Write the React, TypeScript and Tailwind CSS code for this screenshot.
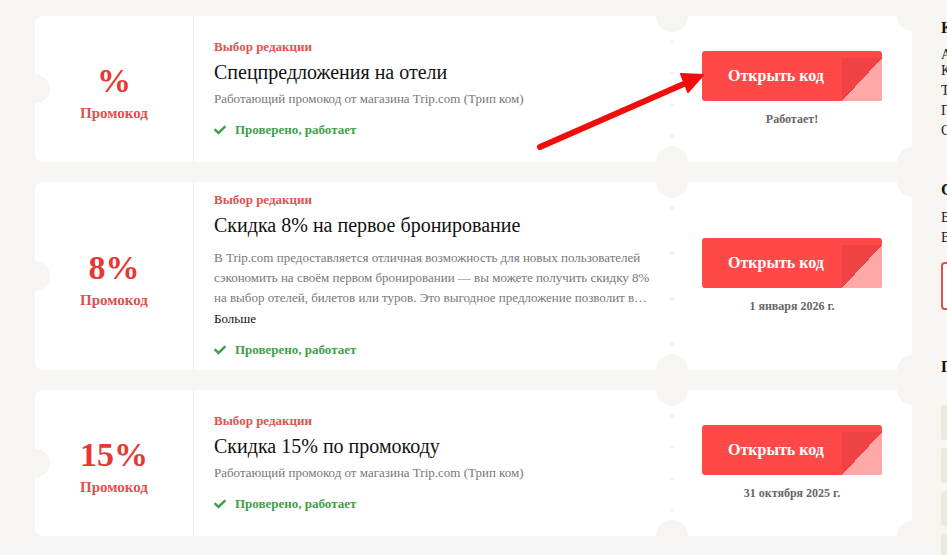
import React from "react";
import { FaCheck } from "react-icons/fa";

type Coupon = {
  big: string;
  title: string;
  desc?: string;
  long?: string;
  caption: string;
};

const coupons: Coupon[] = [
  {
    big: "%",
    title: "Спецпредложения на отели",
    desc: "Работающий промокод от магазина Trip.com (Трип ком)",
    caption: "Работает!",
  },
  {
    big: "8%",
    title: "Скидка 8% на первое бронирование",
    long:
      "В Trip.com предоставляется отличная возможность для новых пользователей сэкономить на своём первом бронировании — вы можете получить скидку 8% на выбор отелей, билетов или туров. Это выгодное предложение позволит вам сэкономить на поездке. Воспользуйтесь промокодом при оформлении заказа.",
    caption: "1 января 2026 г.",
  },
  {
    big: "15%",
    title: "Скидка 15% по промокоду",
    desc: "Работающий промокод от магазина Trip.com (Трип ком)",
    caption: "31 октября 2025 г.",
  },
];

function Card({ c }: { c: Coupon }) {
  return (
    <div className="relative flex bg-white rounded-[8px] min-h-[146px]">
      {/* left column */}
      <div className="w-[159px] shrink-0 border-r border-[#efefef] flex flex-col items-center justify-center pt-[6px]">
        <div className="text-[34px] leading-[36px] font-bold text-[#e53935]">{c.big}</div>
        <div className="mt-[5px] text-[15px] leading-[18px] font-bold text-[#e05050]">Промокод</div>
      </div>

      {/* content */}
      <div className="flex-1 min-w-0 flex flex-col justify-center py-[10px] pl-[20px] pr-[20px]">
        <div className="text-[13px] leading-[16px] font-bold text-[#e05252]">Выбор редакции</div>
        <div className="mt-[5px] text-[20px] leading-[24px] text-[#111111]">{c.title}</div>
        {c.desc && (
          <div className="mt-[5px] text-[13px] leading-[20px] text-[#777777]">{c.desc}</div>
        )}
        {c.long && (
          <>
            <div className="mt-[11px] text-[13px] leading-[20px] text-[#777777] line-clamp-3">{c.long}</div>
            <div className="mt-[1px] text-[13px] leading-[20px] text-[#111111]">Больше</div>
          </>
        )}
        <div className="mt-[11px] flex items-center h-[20px] text-[13px] font-bold text-[#3e9f48]">
          <FaCheck size={12} className="text-[#3e9f48]" />
          <span className="ml-[9px]">Проверено, работает</span>
        </div>
      </div>

      {/* right column */}
      <div className="w-[240px] shrink-0 flex flex-col items-center justify-center">
        <div className="relative w-[180px] h-[50px] rounded-[3px] bg-[#ff4848] flex items-center pl-[26px] overflow-hidden">
          <span className="relative z-10 text-[16px] font-bold text-white leading-none">Открыть код</span>
          <div className="absolute right-0 bottom-0 w-[40px] h-[43px] bg-[linear-gradient(to_bottom_right,#ef4242_50%,#ffa8a8_50%)]" />
        </div>
        <div className="mt-[10px] text-[12px] leading-[16px] font-bold text-[#666666]">{c.caption}</div>
      </div>

      {/* ticket notches */}
      <div className="absolute left-[-14.5px] top-1/2 -translate-y-1/2 w-[29px] h-[29px] rounded-full bg-[#f6f5f1]" />
      <div className="absolute left-[621px] top-[-16px] w-[32px] h-[32px] rounded-full bg-[#f6f5f1]" />
      <div className="absolute left-[621px] bottom-[-16px] w-[32px] h-[32px] rounded-full bg-[#f6f5f1]" />
      <div className="absolute right-[-15px] top-[-15px] w-[30px] h-[30px] rounded-full bg-[#f6f5f1]" />
      <div className="absolute right-[-15px] bottom-[-15px] w-[30px] h-[30px] rounded-full bg-[#f6f5f1]" />
      <div className="absolute left-[635px] top-[24px] bottom-[24px] flex flex-col justify-between">
        <div className="w-[4px] h-[4px] rounded-full bg-[#f3f2ee]" />
        <div className="w-[4px] h-[4px] rounded-full bg-[#f3f2ee]" />
        <div className="w-[4px] h-[4px] rounded-full bg-[#f3f2ee]" />
        <div className="w-[4px] h-[4px] rounded-full bg-[#f3f2ee]" />
      </div>
    </div>
  );
}

function Sidebar() {
  return (
    <div className="w-[300px] shrink-0 pt-[2px] text-[#222222]">
      <div className="text-[16px] leading-[20px] font-bold text-[#111111] whitespace-nowrap">Как использовать промокод</div>
      <div className="mt-[9px] flex flex-col gap-[4px] text-[14px] leading-[16px] whitespace-nowrap">
        <div>
          Авторизуйтесь на сайте Trip.com
          <br />
          Как новый или постоянный клиент
        </div>
        <div>Только потом выберите услугу</div>
        <div>Перейдите к оформлению заказа</div>
        <div>Скопируйте и вставьте промокод</div>
      </div>

      <div className="mt-[41px] text-[16px] leading-[20px] font-bold text-[#111111] whitespace-nowrap">Сколько действует промокод?</div>
      <div className="mt-[10px] flex flex-col gap-[4px] text-[14px] leading-[16px] whitespace-nowrap">
        <div>Все промокоды проверяются</div>
        <div>Вы можете подписаться</div>
      </div>
      <div className="mt-[16px] h-[48px] w-[260px] rounded-[4px] border-2 border-[#d9534f] bg-white" />

      <div className="mt-[47px] text-[16px] leading-[20px] font-bold text-[#111111] whitespace-nowrap">Похожие магазины</div>
      <div className="mt-[28px] flex flex-col gap-[8px]">
        <div className="h-[35px] w-[260px] rounded-[3px] bg-[#ece9e1]" />
        <div className="h-[35px] w-[260px] rounded-[3px] bg-[#ece9e1]" />
        <div className="h-[35px] w-[260px] rounded-[3px] bg-[#ece9e1]" />
        <div className="h-[35px] w-[260px] rounded-[3px] bg-[#ece9e1]" />
      </div>
    </div>
  );
}

export default function App() {
  return (
    <div className="relative w-[947px] h-[555px] overflow-hidden bg-[#f6f5f1] font-['Liberation_Serif','Times_New_Roman',serif]">
      <div className="flex pl-[35px] pt-[16px] gap-[29px]">
        <div className="w-[877px] shrink-0 flex flex-col gap-[20px]">
          {coupons.map((c, i) => (
            <Card key={i} c={c} />
          ))}
        </div>
        <Sidebar />
      </div>
      <svg className="absolute left-0 top-0 pointer-events-none" width="947" height="555">
        <line x1="540" y1="147" x2="686" y2="83" stroke="#f20d0d" strokeWidth="6" strokeLinecap="round" />
        <polygon points="703,75 688,92 681,74" fill="#f20d0d" stroke="#f20d0d" strokeWidth="2" strokeLinejoin="round" />
      </svg>
    </div>
  );
}
